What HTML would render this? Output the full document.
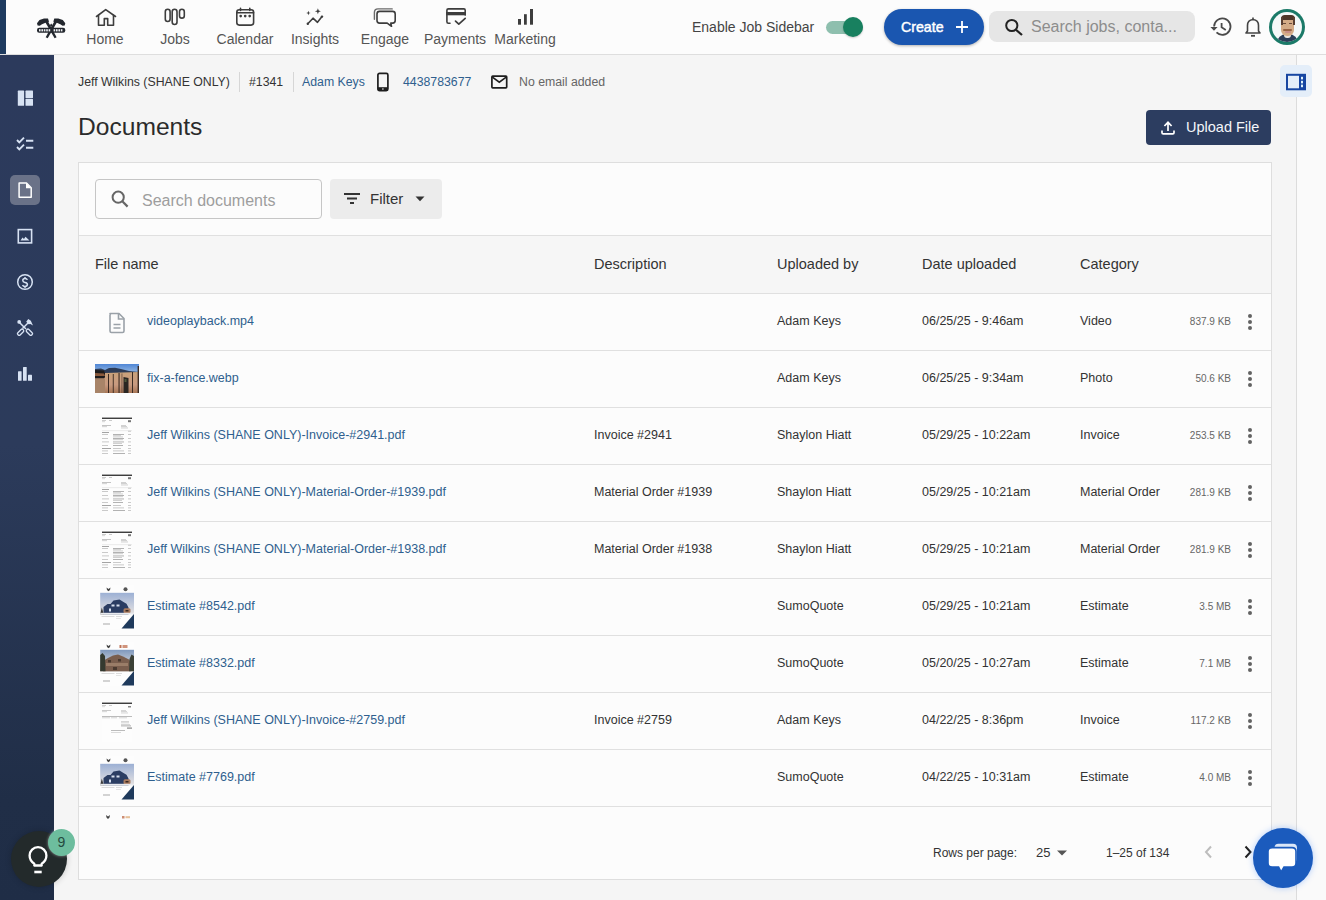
<!DOCTYPE html>
<html><head><meta charset="utf-8"><style>
*{box-sizing:border-box;margin:0;padding:0}
html,body{width:1326px;height:900px;overflow:hidden}
body{background:#f5f5f5;font-family:"Liberation Sans",sans-serif;color:#333;position:relative}
.a{position:absolute;white-space:nowrap}
#top{position:absolute;left:0;top:0;width:1326px;height:55px;background:#fcfcfc;border-bottom:1px solid #dedede}
#side{position:absolute;left:0;top:55px;width:54px;height:845px;background:linear-gradient(#2c3a5c 0px,#2c3b5b 390px,#202e47 745px,#1f2d46 845px)}
.nl{position:absolute;top:31px;width:70px;text-align:center;color:#555;font-size:14px;line-height:16px;white-space:nowrap}
#rpanel{position:absolute;left:1296px;top:55px;width:30px;height:845px;background:#fafafa;border-left:1px solid #dcdcdc}
.crumb{position:absolute;top:74px;font-size:12.3px;line-height:16px;white-space:nowrap;color:#333}
.link{color:#2f5f8e}
#card{position:absolute;left:78px;top:162px;width:1194px;height:718px;background:#fcfcfc;border:1px solid #dedede;overflow:hidden}
.th{position:absolute;top:0;font-size:14.5px;line-height:57px;color:#333;white-space:nowrap}
.row{position:absolute;left:0;width:1192px;height:57px;border-bottom:1px solid #e0e0e0}
.c{position:absolute;top:0;line-height:55px;font-size:12.5px;white-space:nowrap;color:#333}
.fn{color:#2f5f8e}
.sz{position:absolute;right:40px;top:0;line-height:55px;font-size:10px;color:#666;white-space:nowrap}
.kb{position:absolute;left:1169px;top:20px;width:4px;height:16px}
.kb i{position:absolute;left:0;width:4px;height:4px;border-radius:2px;background:#626262}
</style></head><body>
<div id="top"><div class="a" style="left:0;top:0;width:6px;height:54px;background:#1f3b5f"></div></div>

<svg class="a" style="left:32px;top:12px" width="40" height="30" viewBox="32 12 40 30">
 <g fill="#23272e">
  <path d="M37 23.2 L39.5 20 L44 18.6 L48 18.4 L49 21.8 L45.5 22.8 L42 24.2 L39.8 25.8 L37.6 25.6Z"/>
  <path d="M65.3 23.2 L62.8 20 L58.3 18.6 L54.3 18.4 L53.3 21.8 L56.8 22.8 L60.3 24.2 L62.5 25.8 L64.7 25.6Z"/>
  <path d="M45 21.8 L47.5 20.5 L56.6 37.2 L54.6 38.2Z"/>
  <path d="M57.3 21.8 L54.8 20.5 L45.7 37.2 L47.7 38.2Z"/>
  <rect x="37" y="27.8" width="28.3" height="5" rx="2.2"/>
  <path d="M51.2 23.5 L52.5 25.2 L51.2 27 L49.9 25.2Z"/>
 </g>
 <g fill="#f0f2f5">
  <rect x="39" y="29.2" width="1.6" height="2.2"/><rect x="41.4" y="29.2" width="1.6" height="2.2"/><rect x="43.8" y="29.2" width="1.6" height="2.2"/><rect x="46.2" y="29.2" width="1.6" height="2.2"/><rect x="48.6" y="29.2" width="1.6" height="2.2"/>
  <rect x="53.6" y="29.2" width="1.6" height="2.2"/><rect x="56" y="29.2" width="1.6" height="2.2"/><rect x="58.4" y="29.2" width="1.6" height="2.2"/><rect x="60.8" y="29.2" width="1.6" height="2.2"/>
 </g>
</svg>


<svg class="a" style="left:0;top:0" width="600" height="54" viewBox="0 0 600 54" fill="none" stroke="#3d3d3d" stroke-width="1.6" stroke-linejoin="round" stroke-linecap="round">
 <!-- home -->
 <path d="M96.5 16.5 L105.7 9.6 L115.5 16.5"/>
 <path d="M98.5 15.2 V25.2 H104.3 V18.6 H107.7 V25.2 H113.5 V15.2"/>
 <!-- jobs -->
 <rect x="165.3" y="9.3" width="4.8" height="12.2" rx="2.4"/>
 <rect x="172.2" y="9.3" width="4.8" height="15.2" rx="2.4"/>
 <rect x="179.5" y="9.3" width="4.8" height="8.8" rx="2.4"/>
 <!-- calendar -->
 <rect x="236.8" y="9.8" width="16.8" height="15.3" rx="2.5"/>
 <path d="M236.8 12.8 H253.6"/>
 <path d="M240.5 8.3 V10.5 M249.8 8.3 V10.5"/>
 <g fill="#3d3d3d" stroke="none"><circle cx="240.7" cy="16.1" r="1.35"/><circle cx="245.2" cy="16.1" r="1.35"/><circle cx="249.7" cy="16.1" r="1.35"/></g>
 <!-- insights -->
 <path d="M307.8 23.8 L313 18.2 L317.5 22.3 L322 16.6"/>
 <g fill="#3d3d3d" stroke="none">
  <circle cx="307.8" cy="23.8" r="1.2"/><circle cx="322" cy="16.6" r="1.2"/>
  <path d="M308.4 10.8 L309 12.4 L310.6 13 L309 13.6 L308.4 15.2 L307.8 13.6 L306.2 13 L307.8 12.4Z"/>
  <path d="M317.9 8.2 L318.7 10.4 L320.9 11.2 L318.7 12 L317.9 14.2 L317.1 12 L314.9 11.2 L317.1 10.4Z"/>
 </g>
 <!-- engage -->
 <path d="M374.4 19.2 V12.5 Q374.4 8.9 378 8.9 H392.2" stroke="#6a6a6a" stroke-width="1.4"/>
 <path d="M379.5 11.4 H392.6 Q395.2 11.4 395.2 14 V20.5 Q395.2 23.1 392.6 23.1 H390.8 L391.5 26.3 L387.2 23.1 H379.5 Q377 23.1 377 20.5 V14 Q377 11.4 379.5 11.4Z"/>
 <!-- payments -->
 <path d="M450 23.3 H448.4 Q446.9 23.3 446.9 21.8 V10.2 Q446.9 8.9 448.4 8.9 H463.9 Q465.2 8.9 465.2 10.2 V15"/>
 <rect x="446.1" y="12" width="19.9" height="3.3" fill="#3d3d3d" stroke="none"/>
 <path d="M455.5 21.1 L458.8 24.2 L465.2 18.3" stroke-width="1.7"/>
 <!-- marketing -->
 <g fill="#3d3d3d" stroke="none">
  <rect x="518" y="19" width="3" height="5.7"/>
  <rect x="524" y="14.2" width="2.8" height="10.5"/>
  <rect x="530" y="9" width="3" height="15.7"/>
 </g>
</svg>

<div class="nl" style="left:70px">Home</div><div class="nl" style="left:140px">Jobs</div><div class="nl" style="left:210px">Calendar</div><div class="nl" style="left:280px">Insights</div><div class="nl" style="left:350px">Engage</div><div class="nl" style="left:420px">Payments</div><div class="nl" style="left:490px">Marketing</div>

<div class="a" style="left:692px;top:19px;font-size:14px;line-height:16px;color:#444">Enable Job Sidebar</div>
<div class="a" style="left:826px;top:20.5px;width:37px;height:13.5px;border-radius:7px;background:#8ebfae"></div>
<div class="a" style="left:843px;top:17px;width:20px;height:20px;border-radius:50%;background:#18805f;box-shadow:0 1px 2px rgba(0,0,0,.2)"></div>
<div class="a" style="left:884px;top:9px;width:100px;height:36px;border-radius:18px;background:#1a56b0;box-shadow:0 1px 3px rgba(0,0,0,.3)"></div>
<div class="a" style="left:901px;top:19px;font-size:14.2px;line-height:16px;color:#fff;-webkit-text-stroke:0.45px #fff">Create</div>
<svg class="a" style="left:955px;top:20px" width="14" height="14" viewBox="0 0 14 14"><path d="M7 1 V13 M1 7 H13" stroke="#fff" stroke-width="1.8"/></svg>
<div class="a" style="left:989px;top:11px;width:206px;height:31px;border-radius:8px;background:#e6e6e6"></div>
<svg class="a" style="left:1004px;top:18px" width="20" height="18" viewBox="0 0 20 18"><circle cx="7.8" cy="7.5" r="5.6" fill="none" stroke="#222" stroke-width="2"/><path d="M12 11.7 L18 17" stroke="#222" stroke-width="2.2"/></svg>
<div class="a" style="left:1031px;top:17px;font-size:16px;line-height:20px;color:#8d8d8d">Search jobs, conta...</div>
<svg class="a" style="left:1209px;top:16px" width="24" height="22" viewBox="0 0 24 22" fill="none" stroke="#4a4a4a" stroke-width="1.8">
 <path d="M5.1 10.6 A8.2 8.2 0 1 1 7.5 16.4"/>
 <path d="M1.4 11 H8.6 L5 14.8Z" fill="#4a4a4a" stroke="none"/>
 <path d="M12.6 7 V11.3 L16.8 13.9"/>
</svg>
<svg class="a" style="left:1243px;top:16px" width="20" height="22" viewBox="0 0 20 22" fill="none" stroke="#444" stroke-width="1.6">
 <path d="M3 17 H17 L15.5 15 V9.5 Q15.5 4 10 3.5 Q4.5 4 4.5 9.5 V15Z" stroke-linejoin="round"/>
 <path d="M10 1.5 V3.5"/>
 <path d="M8 19.8 H12" stroke-width="1.8"/>
</svg>
<div class="a" style="left:1269px;top:9px;width:36px;height:36px;border-radius:50%;background:#1b7a68"></div>
<div class="a" style="left:1272px;top:12px;width:30px;height:30px;border-radius:50%;background:#f4f8f8;overflow:hidden;filter:blur(0.45px)">
  <div class="a" style="left:5px;top:22px;width:21px;height:12px;border-radius:9px 9px 0 0;background:#2c3e58"></div>
  <div class="a" style="left:12px;top:21px;width:7px;height:5px;background:#e8e4e0;border-radius:0 0 3px 3px"></div>
  <div class="a" style="left:9px;top:3px;width:13px;height:21px;border-radius:6px 6px 6px 6px;background:#d4ab86"></div>
  <div class="a" style="left:8.5px;top:2.5px;width:14px;height:5px;border-radius:7px 7px 2px 2px;background:#4d3628"></div>
  <div class="a" style="left:8.5px;top:5px;width:2px;height:8px;background:#5a4032"></div>
  <div class="a" style="left:20.5px;top:5px;width:2px;height:8px;background:#5a4032"></div>
  <div class="a" style="left:11px;top:10.5px;width:3px;height:1.5px;background:#6a4c3a"></div>
  <div class="a" style="left:17px;top:10.5px;width:3px;height:1.5px;background:#6a4c3a"></div>
  <div class="a" style="left:11px;top:16.5px;width:9px;height:2.5px;border-radius:2px;background:#9a6444"></div>
  <div class="a" style="left:12.5px;top:19px;width:6px;height:2px;border-radius:1px;background:#c98f88"></div>
</div>

<div id="side"></div>

<div class="a" style="left:10px;top:175px;width:30px;height:30px;border-radius:5px;background:#6a7288"></div>
<svg class="a" style="left:0;top:55px" width="54" height="340" viewBox="0 55 54 340">
 <g fill="#d7e2f3">
  <rect x="17.8" y="90.6" width="6.3" height="15.2" rx="0.6"/>
  <rect x="25.5" y="90.6" width="7.5" height="7.4" rx="0.6"/>
  <rect x="25.5" y="98.8" width="7.5" height="7" rx="0.6"/>
 </g>
 <g fill="none" stroke="#d7e2f3" stroke-width="1.9">
  <path d="M17 140 L19.3 142.3 L24 137.6"/>
  <path d="M17 147 L19.3 149.3 L24 144.6"/>
  <path d="M26 140.7 H33.3 M26 147.7 H33.3"/>
 </g>
 <path d="M19.1 183 H26.5 L31.2 187.7 V197.3 H19.1Z" fill="none" stroke="#ffffff" stroke-width="1.5" stroke-linejoin="round"/>
 <path d="M26 183 V188.2 H31.2Z" fill="#ffffff"/>
 <rect x="18.3" y="229.6" width="13.3" height="13.3" fill="none" stroke="#d7e2f3" stroke-width="1.6"/>
 <path d="M20.5 240.5 L22.5 237.5 L24 239 L25.5 236.8 L29.5 240.5Z" fill="#d7e2f3"/>
 <circle cx="25" cy="282" r="7.3" fill="none" stroke="#d7e2f3" stroke-width="1.5"/>
 <path d="M27.3 279.9 Q26.9 278.5 25 278.5 Q22.8 278.5 22.8 280.4 Q22.8 282 25 282.4 Q27.4 282.8 27.4 284.6 Q27.4 286.4 25 286.4 Q23.1 286.4 22.6 285 M25 277 V278.5 M25 286.4 V288" fill="none" stroke="#d7e2f3" stroke-width="1.5"/>
 <g fill="none" stroke="#d7e2f3" stroke-width="1.3">
  <path d="M19.5 322.5 L26 329" stroke-width="1.5"/>
  <path d="M28.5 322.5 L22.5 328.5" stroke-width="1.5"/>
  <rect x="-1.6" y="-3.6" width="3.2" height="7.2" rx="1.3" transform="translate(20.6 332.2) rotate(45)"/>
  <rect x="-1.6" y="-3.6" width="3.2" height="7.2" rx="1.3" transform="translate(29.4 332.2) rotate(-45)"/>
 </g>
 <circle cx="19.2" cy="321.9" r="1.9" fill="#d7e2f3"/>
 <path d="M26.2 321.8 L28.3 318.9 L30.8 320.8 L33 325.4 L30.4 324.1 L28.6 324.2Z" fill="#d7e2f3"/>
 <g fill="#d7e2f3">
  <rect x="18" y="371.3" width="3.6" height="9.4" rx="0.5"/>
  <rect x="23" y="367" width="3.7" height="13.7" rx="0.5"/>
  <rect x="28" y="374.7" width="4" height="6" rx="0.5"/>
 </g>
</svg>
<div class="a" style="left:11px;top:831px;width:56px;height:56px;border-radius:50%;background:#232a2b;box-shadow:0 0 6px rgba(0,0,0,.2)"></div>
<svg class="a" style="left:26px;top:844px" width="24" height="32" viewBox="0 0 24 32" fill="none" stroke="#fff" stroke-width="2.3">
 <path d="M8.3 21.5 V19.8 Q3.6 16.8 3.6 11.6 A8.4 8.4 0 0 1 20.4 11.6 Q20.4 16.8 15.7 19.8 V21.5Z" stroke-linejoin="round"/>
 <path d="M8.3 28 H15.7" stroke-width="2.6"/>
</svg>
<div class="a" style="left:48px;top:829px;width:27px;height:27px;border-radius:50%;background:#6dbd9e;color:#244a3e;font-size:14px;line-height:27px;text-align:center;box-shadow:0 0 3px rgba(255,255,255,.5)">9</div>

<div id="rpanel"></div>

<div class="crumb" style="left:78px">Jeff Wilkins (SHANE ONLY)</div>
<div class="a" style="left:239px;top:72px;width:1px;height:20px;background:#d6d6d6"></div>
<div class="crumb" style="left:249px">#1341</div>
<div class="a" style="left:293px;top:72px;width:1px;height:20px;background:#d6d6d6"></div>
<div class="crumb link" style="left:302px">Adam Keys</div>
<svg class="a" style="left:376px;top:72px" width="14" height="20" viewBox="0 0 14 20"><rect x="1.9" y="1.4" width="10" height="17.2" rx="1.6" fill="none" stroke="#1e1e1e" stroke-width="1.7"/><rect x="1.9" y="15.2" width="10" height="3.4" fill="#1e1e1e"/><circle cx="6.9" cy="17" r="0.8" fill="#f5f5f5"/></svg>
<div class="crumb link" style="left:403px">4438783677</div>
<svg class="a" style="left:489px;top:73px" width="20" height="17" viewBox="0 0 20 17"><rect x="2.9" y="3.2" width="14.8" height="11.6" rx="0.8" fill="none" stroke="#1e1e1e" stroke-width="1.7"/><path d="M3.4 4.2 L10.3 9.2 L17.2 4.2" fill="none" stroke="#1e1e1e" stroke-width="1.6"/></svg>
<div class="crumb" style="left:519px;color:#666">No email added</div>
<div class="a" style="left:78px;top:113px;font-size:24.6px;line-height:28px;color:#2b2b2b">Documents</div>
<div class="a" style="left:1146px;top:110px;width:125px;height:35px;border-radius:4px;background:#2c3d60"></div>
<svg class="a" style="left:1158px;top:118px" width="20" height="20" viewBox="0 0 20 20" fill="none" stroke="#fff" stroke-width="1.7"><path d="M10 13 V4.5 M6.4 8 L10 4.3 L13.6 8"/><path d="M4 12.4 V14.7 Q4 15.8 5.2 15.8 H14.8 Q16 15.8 16 14.7 V12.4"/></svg>
<div class="a" style="left:1186px;top:119px;font-size:14.5px;line-height:17px;color:#f4f6fa">Upload File</div>
<div class="a" style="left:1279.5px;top:65px;width:32.5px;height:31.5px;border-radius:5px;background:#e4eef9"></div>
<svg class="a" style="left:1284px;top:72px" width="24" height="20" viewBox="0 0 24 20"><rect x="3" y="2.8" width="18" height="14.5" fill="none" stroke="#1746a2" stroke-width="2"/><rect x="15" y="2.8" width="6" height="14.5" fill="#1746a2"/><g fill="#dff3fb"><rect x="17" y="4.8" width="2" height="2.6"/><rect x="17" y="8.8" width="2" height="2.6"/><rect x="17" y="12.6" width="2" height="2.6"/></g></svg>

<div id="card"><div class="a" style="left:16px;top:16px;width:227px;height:40px;border:1px solid #c6c6c6;border-radius:4px;background:#fcfcfc"></div><svg class="a" style="left:32px;top:27px" width="18" height="18" viewBox="0 0 18 18"><circle cx="7.2" cy="7.2" r="5.6" fill="none" stroke="#666" stroke-width="2"/><path d="M11.3 11.3 L16.6 16.6" stroke="#666" stroke-width="2.2"/></svg><div class="a" style="left:63px;top:27.5px;font-size:16px;line-height:20px;color:#9e9e9e">Search documents</div><div class="a" style="left:251px;top:16px;width:112px;height:40px;border-radius:4px;background:#ececec"></div><svg class="a" style="left:265px;top:30px" width="16" height="12" viewBox="0 0 16 12"><path d="M0 1 H16 M3 5.5 H13 M6 10 H10" stroke="#333" stroke-width="1.8"/></svg><div class="a" style="left:291px;top:27px;font-size:15px;line-height:18px;color:#333">Filter</div><svg class="a" style="left:336px;top:33px" width="10" height="6" viewBox="0 0 10 6"><path d="M0.5 0.5 H9.5 L5 5.2Z" fill="#333"/></svg><div class="a" style="left:0;top:72px;width:1192px;height:59px;background:#f6f6f6;border-top:1px solid #e0e0e0;border-bottom:1px solid #e0e0e0"></div><div class="th" style="left:16px;top:73px">File name</div><div class="th" style="left:515px;top:73px">Description</div><div class="th" style="left:698px;top:73px">Uploaded by</div><div class="th" style="left:843px;top:73px">Date uploaded</div><div class="th" style="left:1001px;top:73px">Category</div><div class="row" style="top:131px"><svg class="a" style="left:28px;top:18px" width="20" height="22" viewBox="0 0 20 22"><path d="M3 1.5 H12 L17 6.5 V19 Q17 20.5 15.5 20.5 H4.5 Q3 20.5 3 19 V3 Q3 1.5 4.5 1.5Z" fill="none" stroke="#9aa1a8" stroke-width="1.6" stroke-linejoin="round"/><path d="M11.5 1.5 V7 H17" fill="none" stroke="#9aa1a8" stroke-width="1.6"/><path d="M6.5 12.5 H13.5 M6.5 16 H13.5" stroke="#9aa1a8" stroke-width="1.6"/></svg><div class="c fn" style="left:68px">videoplayback.mp4</div><div class="c" style="left:515px"></div><div class="c" style="left:698px">Adam Keys</div><div class="c" style="left:843px">06/25/25 - 9:46am</div><div class="c" style="left:1001px">Video</div><div class="sz">837.9 KB</div><div class="kb"><i style="top:0"></i><i style="top:6px"></i><i style="top:12px"></i></div></div><div class="row" style="top:188px"><svg class="a" style="left:16px;top:13px;filter:blur(0.35px)" width="44" height="29" viewBox="0 0 44 29"><defs><linearGradient id="fsky" x1="0" y1="0" x2="0" y2="1"><stop offset="0" stop-color="#4f86d6"/><stop offset="1" stop-color="#8fb4e0"/></linearGradient><linearGradient id="fpl" x1="0" y1="0" x2="0" y2="1"><stop offset="0" stop-color="#c9a27a"/><stop offset="0.6" stop-color="#c89a80"/><stop offset="1" stop-color="#a87656"/></linearGradient></defs><rect width="44" height="29" fill="url(#fpl)"/><rect width="44" height="8" fill="url(#fsky)"/><path d="M0 5 L6 4.5 L10 6 L14 4 L20 3.8 L26 5 L30 6 L34 7 L44 8 V12 H0Z" fill="#2c3b56"/><path d="M0 6 L9 6.5 L11 12 L9 14.5 L0 14.5Z" fill="#1e1c1c"/><path d="M0 9 L9 9.5 L10 12 L0 12Z" fill="#8a5a3c"/><path d="M10 9 L44 8 V29 H10Z" fill="url(#fpl)"/><rect x="0" y="14.5" width="10" height="14.5" fill="#a88468"/><g fill="#3a2a22"><rect x="13" y="10" width="1" height="19"/><rect x="17.8" y="10" width="0.9" height="19"/><rect x="23.5" y="9" width="1.1" height="20"/><rect x="26.5" y="9.5" width="0.9" height="19.5" opacity=".6"/><rect x="37" y="8" width="1" height="21"/><rect x="42.6" y="2" width="1.4" height="27"/></g><path d="M28.5 13 L31 13.5 L33.5 14 V29 H28.5Z" fill="#2a2622"/><rect x="29.5" y="15" width="2" height="3" fill="#5e7044" opacity=".7"/></svg><div class="c fn" style="left:68px">fix-a-fence.webp</div><div class="c" style="left:515px"></div><div class="c" style="left:698px">Adam Keys</div><div class="c" style="left:843px">06/25/25 - 9:34am</div><div class="c" style="left:1001px">Photo</div><div class="sz">50.6 KB</div><div class="kb"><i style="top:0"></i><i style="top:6px"></i><i style="top:12px"></i></div></div><div class="row" style="top:245px"><svg class="a" style="left:22px;top:9px;filter:blur(0.25px)" width="32" height="40" viewBox="0 0 32 40"><rect x="1" y="0" width="30" height="40" fill="#fdfdfd"/><rect x="1" y="0.6" width="30" height="1.3" fill="#2a2a2a"/><g fill="#bdbdbd"><rect x="1" y="3" width="4" height="0.8"/><rect x="8" y="3" width="3" height="0.8"/><rect x="1" y="4.5" width="3" height="0.6"/><rect x="27" y="3.2" width="3" height="2" fill="#777"/><rect x="1" y="8" width="9" height="0.9"/><rect x="1" y="9.4" width="5" height="0.7"/><rect x="20" y="8" width="5" height="0.7"/><rect x="20" y="9.3" width="6" height="0.7"/><rect x="20" y="10.6" width="7" height="0.7"/><rect x="1" y="13.5" width="30" height="0.6" fill="#ddd"/><rect x="1" y="15" width="7" height="0.9" fill="#999"/><rect x="27" y="13.8" width="3" height="0.8"/><rect x="1" y="17" width="6" height="0.8"/><rect x="12" y="17" width="11" height="0.9" fill="#aaa"/><rect x="27" y="17" width="3" height="0.8"/><rect x="12" y="18.4" width="8" height="0.7"/><rect x="12" y="19.6" width="10" height="0.7"/><rect x="1" y="21" width="6" height="0.8"/><rect x="12" y="21" width="11" height="0.9" fill="#aaa"/><rect x="27" y="21" width="3" height="0.8"/><rect x="12" y="22.4" width="10" height="0.7"/><rect x="1" y="24.5" width="7" height="0.8"/><rect x="12" y="24.5" width="11" height="0.9" fill="#aaa"/><rect x="27" y="24.5" width="3" height="0.8"/><rect x="12" y="26" width="9" height="0.7"/><rect x="1" y="28" width="6" height="0.8"/><rect x="12" y="28" width="10" height="0.9" fill="#aaa"/><rect x="27" y="28" width="3" height="0.8"/><rect x="1" y="31" width="9" height="0.9" fill="#999"/><rect x="12" y="31" width="8" height="0.8"/><rect x="27" y="31" width="3" height="0.8"/><rect x="1" y="33.5" width="6" height="0.8"/><rect x="12" y="33.5" width="11" height="0.8"/><rect x="27" y="33.5" width="3" height="0.8"/><rect x="1" y="36" width="6" height="0.8"/><rect x="12" y="36" width="12" height="0.9" fill="#aaa"/><rect x="27" y="36" width="3" height="0.8"/></g></svg><div class="c fn" style="left:68px">Jeff Wilkins (SHANE ONLY)-Invoice-#2941.pdf</div><div class="c" style="left:515px">Invoice #2941</div><div class="c" style="left:698px">Shaylon Hiatt</div><div class="c" style="left:843px">05/29/25 - 10:22am</div><div class="c" style="left:1001px">Invoice</div><div class="sz">253.5 KB</div><div class="kb"><i style="top:0"></i><i style="top:6px"></i><i style="top:12px"></i></div></div><div class="row" style="top:302px"><svg class="a" style="left:22px;top:9px;filter:blur(0.25px)" width="32" height="40" viewBox="0 0 32 40"><rect x="1" y="0" width="30" height="40" fill="#fdfdfd"/><rect x="1" y="0.6" width="30" height="1.3" fill="#2a2a2a"/><g fill="#bdbdbd"><rect x="1" y="3" width="4" height="0.8"/><rect x="8" y="3" width="3" height="0.8"/><rect x="1" y="4.5" width="3" height="0.6"/><rect x="27" y="3.2" width="3" height="2" fill="#777"/><rect x="1" y="8" width="9" height="0.9"/><rect x="1" y="9.4" width="5" height="0.7"/><rect x="20" y="8" width="5" height="0.7"/><rect x="20" y="9.3" width="6" height="0.7"/><rect x="20" y="10.6" width="7" height="0.7"/><rect x="1" y="13.5" width="30" height="0.6" fill="#ddd"/><rect x="1" y="15" width="7" height="0.9" fill="#999"/><rect x="27" y="13.8" width="3" height="0.8"/><rect x="1" y="17" width="6" height="0.8"/><rect x="12" y="17" width="11" height="0.9" fill="#aaa"/><rect x="27" y="17" width="3" height="0.8"/><rect x="12" y="18.4" width="8" height="0.7"/><rect x="12" y="19.6" width="10" height="0.7"/><rect x="1" y="21" width="6" height="0.8"/><rect x="12" y="21" width="11" height="0.9" fill="#aaa"/><rect x="27" y="21" width="3" height="0.8"/><rect x="12" y="22.4" width="10" height="0.7"/><rect x="1" y="24.5" width="7" height="0.8"/><rect x="12" y="24.5" width="11" height="0.9" fill="#aaa"/><rect x="27" y="24.5" width="3" height="0.8"/><rect x="12" y="26" width="9" height="0.7"/><rect x="1" y="28" width="6" height="0.8"/><rect x="12" y="28" width="10" height="0.9" fill="#aaa"/><rect x="27" y="28" width="3" height="0.8"/><rect x="1" y="31" width="9" height="0.9" fill="#999"/><rect x="12" y="31" width="8" height="0.8"/><rect x="27" y="31" width="3" height="0.8"/><rect x="1" y="33.5" width="6" height="0.8"/><rect x="12" y="33.5" width="11" height="0.8"/><rect x="27" y="33.5" width="3" height="0.8"/><rect x="1" y="36" width="6" height="0.8"/><rect x="12" y="36" width="12" height="0.9" fill="#aaa"/><rect x="27" y="36" width="3" height="0.8"/></g></svg><div class="c fn" style="left:68px">Jeff Wilkins (SHANE ONLY)-Material-Order-#1939.pdf</div><div class="c" style="left:515px">Material Order #1939</div><div class="c" style="left:698px">Shaylon Hiatt</div><div class="c" style="left:843px">05/29/25 - 10:21am</div><div class="c" style="left:1001px">Material Order</div><div class="sz">281.9 KB</div><div class="kb"><i style="top:0"></i><i style="top:6px"></i><i style="top:12px"></i></div></div><div class="row" style="top:359px"><svg class="a" style="left:22px;top:9px;filter:blur(0.25px)" width="32" height="40" viewBox="0 0 32 40"><rect x="1" y="0" width="30" height="40" fill="#fdfdfd"/><rect x="1" y="0.6" width="30" height="1.3" fill="#2a2a2a"/><g fill="#bdbdbd"><rect x="1" y="3" width="4" height="0.8"/><rect x="8" y="3" width="3" height="0.8"/><rect x="1" y="4.5" width="3" height="0.6"/><rect x="27" y="3.2" width="3" height="2" fill="#777"/><rect x="1" y="8" width="9" height="0.9"/><rect x="1" y="9.4" width="5" height="0.7"/><rect x="20" y="8" width="5" height="0.7"/><rect x="20" y="9.3" width="6" height="0.7"/><rect x="20" y="10.6" width="7" height="0.7"/><rect x="1" y="13.5" width="30" height="0.6" fill="#ddd"/><rect x="1" y="15" width="7" height="0.9" fill="#999"/><rect x="27" y="13.8" width="3" height="0.8"/><rect x="1" y="17" width="6" height="0.8"/><rect x="12" y="17" width="11" height="0.9" fill="#aaa"/><rect x="27" y="17" width="3" height="0.8"/><rect x="12" y="18.4" width="8" height="0.7"/><rect x="12" y="19.6" width="10" height="0.7"/><rect x="1" y="21" width="6" height="0.8"/><rect x="12" y="21" width="11" height="0.9" fill="#aaa"/><rect x="27" y="21" width="3" height="0.8"/><rect x="12" y="22.4" width="10" height="0.7"/><rect x="1" y="24.5" width="7" height="0.8"/><rect x="12" y="24.5" width="11" height="0.9" fill="#aaa"/><rect x="27" y="24.5" width="3" height="0.8"/><rect x="12" y="26" width="9" height="0.7"/><rect x="1" y="28" width="6" height="0.8"/><rect x="12" y="28" width="10" height="0.9" fill="#aaa"/><rect x="27" y="28" width="3" height="0.8"/><rect x="1" y="31" width="9" height="0.9" fill="#999"/><rect x="12" y="31" width="8" height="0.8"/><rect x="27" y="31" width="3" height="0.8"/><rect x="1" y="33.5" width="6" height="0.8"/><rect x="12" y="33.5" width="11" height="0.8"/><rect x="27" y="33.5" width="3" height="0.8"/><rect x="1" y="36" width="6" height="0.8"/><rect x="12" y="36" width="12" height="0.9" fill="#aaa"/><rect x="27" y="36" width="3" height="0.8"/></g></svg><div class="c fn" style="left:68px">Jeff Wilkins (SHANE ONLY)-Material-Order-#1938.pdf</div><div class="c" style="left:515px">Material Order #1938</div><div class="c" style="left:698px">Shaylon Hiatt</div><div class="c" style="left:843px">05/29/25 - 10:21am</div><div class="c" style="left:1001px">Material Order</div><div class="sz">281.9 KB</div><div class="kb"><i style="top:0"></i><i style="top:6px"></i><i style="top:12px"></i></div></div><div class="row" style="top:416px"><svg class="a" style="left:20px;top:6px" width="36" height="44" viewBox="0 0 36 44"><rect x="1" y="0" width="34" height="44" fill="#fdfdfd"/><defs><linearGradient id="gest" x1="0" y1="0" x2="0" y2="1"><stop offset="0" stop-color="#9cb0d4"/><stop offset="0.6" stop-color="#c9cfdd"/><stop offset="1" stop-color="#e6e2e0"/></linearGradient></defs><path d="M7.5 2.5 L9.5 4 L11.5 2.5 L11 5 L9.5 6.2 L8 5Z" fill="#444"/><circle cx="26.5" cy="4.2" r="2" fill="#555"/><rect x="1.2" y="7.8" width="33.8" height="21.4" fill="url(#gest)"/><path d="M4.5 29.2 V22 L8.5 19 L11.5 19 L14.5 15.5 L20.5 14.6 L24.5 17 L27.5 18.8 L29.5 22.5 V29.2Z" fill="#2b3d62"/><path d="M1.2 29.2 L2.8 22.5 L4.8 29.2Z" fill="#3a3a3a"/><g fill="#d8e0ee"><rect x="12.5" y="19.5" width="3" height="2"/><rect x="17.5" y="19.5" width="3" height="2"/><rect x="10" y="23.5" width="2" height="3"/></g><rect x="24.5" y="23.2" width="7" height="5" rx="1.5" fill="#a87a5e"/><rect x="26.5" y="25" width="3" height="1.5" fill="#3a2a22"/><rect x="1.2" y="27.8" width="33.8" height="1.4" fill="#e8eaee"/><path d="M35 29 L22.5 43.5 H35Z" fill="#1f3a5c"/><g fill="#d4d4d4"><rect x="2.5" y="31" width="13" height="0.8"/><rect x="17" y="31" width="6" height="0.8"/><rect x="17" y="33" width="5" height="0.6"/><rect x="4" y="38.5" width="7" height="1" fill="#aaa"/></g></svg><div class="c fn" style="left:68px">Estimate #8542.pdf</div><div class="c" style="left:515px"></div><div class="c" style="left:698px">SumoQuote</div><div class="c" style="left:843px">05/29/25 - 10:21am</div><div class="c" style="left:1001px">Estimate</div><div class="sz">3.5 MB</div><div class="kb"><i style="top:0"></i><i style="top:6px"></i><i style="top:12px"></i></div></div><div class="row" style="top:473px"><svg class="a" style="left:20px;top:6px" width="36" height="44" viewBox="0 0 36 44"><rect x="1" y="0" width="34" height="44" fill="#fdfdfd"/><defs><linearGradient id="gest2" x1="0" y1="0" x2="0" y2="1"><stop offset="0" stop-color="#7f98bd"/><stop offset="0.5" stop-color="#b9c3d2"/><stop offset="1" stop-color="#8a7a6a"/></linearGradient></defs><path d="M7.5 2.5 L9.5 4 L11.5 2.5 L11 5 L9.5 6.2 L8 5Z" fill="#444"/><rect x="20.5" y="3" width="2" height="3" fill="#b35a38" opacity=".85"/><rect x="23.5" y="3" width="5" height="3" fill="#c07050" opacity=".75"/><rect x="1.2" y="7.8" width="33.8" height="21.4" fill="url(#gest2)"/><path d="M4 29.2 V19 L9 16 L14 13.5 L19 12.5 L24 14.5 L30 17.5 L32 20 V29.2Z" fill="#7a5e4e"/><g fill="#9a7d68"><rect x="7" y="21" width="22" height="3"/></g><g fill="#4a3a30"><rect x="9" y="18" width="3" height="2.5"/><rect x="19" y="17" width="3" height="2.5"/><rect x="14" y="25" width="4" height="3"/></g><path d="M1.2 29.2 V13 L3.5 11 L6 14 L6.5 29.2Z" fill="#343a30"/><path d="M35 29.2 V14 L32.5 12.5 L30.5 17 L30 29.2Z" fill="#3b4036"/><path d="M35 29 L22.5 43.5 H35Z" fill="#1f3a5c"/><g fill="#d4d4d4"><rect x="2.5" y="31" width="13" height="0.8"/><rect x="17" y="31" width="6" height="0.8"/><rect x="17" y="33" width="5" height="0.6"/><rect x="4" y="38.5" width="7" height="1" fill="#aaa"/></g></svg><div class="c fn" style="left:68px">Estimate #8332.pdf</div><div class="c" style="left:515px"></div><div class="c" style="left:698px">SumoQuote</div><div class="c" style="left:843px">05/20/25 - 10:27am</div><div class="c" style="left:1001px">Estimate</div><div class="sz">7.1 MB</div><div class="kb"><i style="top:0"></i><i style="top:6px"></i><i style="top:12px"></i></div></div><div class="row" style="top:530px"><svg class="a" style="left:22px;top:9px;filter:blur(0.25px)" width="32" height="40" viewBox="0 0 32 40"><rect x="1" y="0" width="30" height="40" fill="#fdfdfd"/><rect x="1" y="0.6" width="30" height="1.3" fill="#2a2a2a"/><g fill="#c4c4c4"><rect x="1" y="3" width="4" height="0.8"/><rect x="8" y="3" width="3" height="0.8"/><rect x="1" y="4.5" width="3" height="0.6"/><rect x="27" y="4" width="3" height="1.5" fill="#888"/><rect x="1" y="8" width="9" height="0.9"/><rect x="1" y="9.4" width="5" height="0.7"/><rect x="20" y="8" width="5" height="0.7"/><rect x="20" y="9.3" width="6" height="0.7"/><rect x="20" y="10.6" width="7" height="0.7"/><rect x="1" y="14" width="30" height="0.8" fill="#aaa"/><rect x="1" y="15.5" width="8" height="0.7"/><rect x="10" y="15.5" width="6" height="0.7"/><rect x="18" y="15.5" width="8" height="0.7"/><rect x="20" y="19" width="8" height="0.7"/><rect x="20" y="20.5" width="8" height="0.7"/><rect x="20" y="22" width="9" height="0.7"/><rect x="20" y="23.5" width="10" height="0.8" fill="#999"/><rect x="26" y="25.5" width="5" height="1.2" fill="#888"/><rect x="10" y="28" width="14" height="0.8" fill="#aaa"/><rect x="10" y="30" width="10" height="0.6"/></g></svg><div class="c fn" style="left:68px">Jeff Wilkins (SHANE ONLY)-Invoice-#2759.pdf</div><div class="c" style="left:515px">Invoice #2759</div><div class="c" style="left:698px">Adam Keys</div><div class="c" style="left:843px">04/22/25 - 8:36pm</div><div class="c" style="left:1001px">Invoice</div><div class="sz">117.2 KB</div><div class="kb"><i style="top:0"></i><i style="top:6px"></i><i style="top:12px"></i></div></div><div class="row" style="top:587px"><svg class="a" style="left:20px;top:6px" width="36" height="44" viewBox="0 0 36 44"><rect x="1" y="0" width="34" height="44" fill="#fdfdfd"/><defs><linearGradient id="gest" x1="0" y1="0" x2="0" y2="1"><stop offset="0" stop-color="#9cb0d4"/><stop offset="0.6" stop-color="#c9cfdd"/><stop offset="1" stop-color="#e6e2e0"/></linearGradient></defs><path d="M7.5 2.5 L9.5 4 L11.5 2.5 L11 5 L9.5 6.2 L8 5Z" fill="#444"/><circle cx="26.5" cy="4.2" r="2" fill="#555"/><rect x="1.2" y="7.8" width="33.8" height="21.4" fill="url(#gest)"/><path d="M4.5 29.2 V22 L8.5 19 L11.5 19 L14.5 15.5 L20.5 14.6 L24.5 17 L27.5 18.8 L29.5 22.5 V29.2Z" fill="#2b3d62"/><path d="M1.2 29.2 L2.8 22.5 L4.8 29.2Z" fill="#3a3a3a"/><g fill="#d8e0ee"><rect x="12.5" y="19.5" width="3" height="2"/><rect x="17.5" y="19.5" width="3" height="2"/><rect x="10" y="23.5" width="2" height="3"/></g><rect x="24.5" y="23.2" width="7" height="5" rx="1.5" fill="#a87a5e"/><rect x="26.5" y="25" width="3" height="1.5" fill="#3a2a22"/><rect x="1.2" y="27.8" width="33.8" height="1.4" fill="#e8eaee"/><path d="M35 29 L22.5 43.5 H35Z" fill="#1f3a5c"/><g fill="#d4d4d4"><rect x="2.5" y="31" width="13" height="0.8"/><rect x="17" y="31" width="6" height="0.8"/><rect x="17" y="33" width="5" height="0.6"/><rect x="4" y="38.5" width="7" height="1" fill="#aaa"/></g></svg><div class="c fn" style="left:68px">Estimate #7769.pdf</div><div class="c" style="left:515px"></div><div class="c" style="left:698px">SumoQuote</div><div class="c" style="left:843px">04/22/25 - 10:31am</div><div class="c" style="left:1001px">Estimate</div><div class="sz">4.0 MB</div><div class="kb"><i style="top:0"></i><i style="top:6px"></i><i style="top:12px"></i></div></div><div class="a" style="left:0;top:644px;width:1192px;height:57px"><svg class="a" style="left:26px;top:7px" width="26" height="6" viewBox="0 0 26 6"><path d="M1 1 L3 2.5 L5 1 L4.5 3.5 L3 5 L1.5 3.5Z" fill="#444"/><rect x="17" y="2" width="2.5" height="2.5" fill="#c07050" opacity=".8"/><rect x="20.5" y="2.2" width="4.5" height="2" fill="#e0b080" opacity=".8"/></svg></div><div class="a" style="left:0;top:661px;width:1192px;height:55px;background:#fcfcfc"><div class="a" style="left:854px;top:21px;font-size:12px;line-height:16px;color:#333">Rows per page:</div><div class="a" style="left:957px;top:20px;font-size:13px;line-height:17px;color:#333">25</div><svg class="a" style="left:978px;top:26px" width="10" height="6" viewBox="0 0 10 6"><path d="M0 0.5 H10 L5 5.5Z" fill="#555"/></svg><div class="a" style="left:1027px;top:21px;font-size:12px;line-height:16px;color:#333">1–25 of 134</div><svg class="a" style="left:1124px;top:21px" width="12" height="14" viewBox="0 0 12 14"><path d="M8 1.5 L3 7 L8 12.5" fill="none" stroke="#bdbdbd" stroke-width="2"/></svg><svg class="a" style="left:1163px;top:21px" width="12" height="14" viewBox="0 0 12 14"><path d="M3.5 1.5 L8.5 7 L3.5 12.5" fill="none" stroke="#222" stroke-width="2"/></svg></div></div>

<div class="a" style="left:1253px;top:828px;width:60px;height:60px;border-radius:50%;background:#1b5bbd;box-shadow:0 0 6px rgba(40,120,255,.35)"></div>
<svg class="a" style="left:1265px;top:840px" width="36" height="36" viewBox="0 0 36 36">
 <rect x="9.5" y="3.8" width="22.5" height="18.8" rx="4" fill="#dbe7f8"/>
 <path d="M7 7.6 H27 Q31 7.6 31 11.6 V23 Q31 27 27 27 H19 L16.2 32 L13.6 27 H7 Q3 27 3 23 V11.6 Q3 7.6 7 7.6Z" fill="#fff" stroke="#1b5bbd" stroke-width="1.6"/>
</svg>

</body></html>
